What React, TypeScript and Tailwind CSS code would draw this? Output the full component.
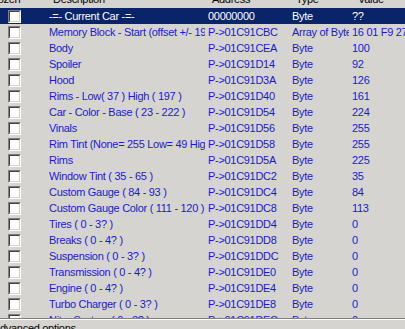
import React from 'react';

type Row = { desc: string; addr: string; type: string; value: string };

const rows: Row[] = [
    { desc: '-=- Current Car -=-', addr: '00000000', type: 'Byte', value: '??' },
    { desc: 'Memory Block - Start (offset +/- 19', addr: 'P->01C91CBC', type: 'Array of Byte', value: '16 01 F9 27' },
    { desc: 'Body', addr: 'P->01C91CEA', type: 'Byte', value: '100' },
    { desc: 'Spoiler', addr: 'P->01C91D14', type: 'Byte', value: '92' },
    { desc: 'Hood', addr: 'P->01C91D3A', type: 'Byte', value: '126' },
    { desc: 'Rims - Low( 37 ) High ( 197 )', addr: 'P->01C91D40', type: 'Byte', value: '161' },
    { desc: 'Car - Color - Base ( 23 - 222 )', addr: 'P->01C91D54', type: 'Byte', value: '224' },
    { desc: 'Vinals', addr: 'P->01C91D56', type: 'Byte', value: '255' },
    { desc: 'Rim Tint (None= 255 Low= 49 High= 50)', addr: 'P->01C91D58', type: 'Byte', value: '255' },
    { desc: 'Rims', addr: 'P->01C91D5A', type: 'Byte', value: '225' },
    { desc: 'Window Tint ( 35 - 65 )', addr: 'P->01C91DC2', type: 'Byte', value: '35' },
    { desc: 'Custom Gauge ( 84 - 93 )', addr: 'P->01C91DC4', type: 'Byte', value: '84' },
    { desc: 'Custom Gauge Color ( 111 - 120 )', addr: 'P->01C91DC8', type: 'Byte', value: '113' },
    { desc: 'Tires ( 0 - 3? )', addr: 'P->01C91DD4', type: 'Byte', value: '0' },
    { desc: 'Breaks ( 0 - 4? )', addr: 'P->01C91DD8', type: 'Byte', value: '0' },
    { desc: 'Suspension ( 0 - 3? )', addr: 'P->01C91DDC', type: 'Byte', value: '0' },
    { desc: 'Transmission ( 0 - 4? )', addr: 'P->01C91DE0', type: 'Byte', value: '0' },
    { desc: 'Engine ( 0 - 4? )', addr: 'P->01C91DE4', type: 'Byte', value: '0' },
    { desc: 'Turbo Charger ( 0 - 3? )', addr: 'P->01C91DE8', type: 'Byte', value: '0' },
    { desc: 'Nitro System ( 0 - 3? )', addr: 'P->01C91DEC', type: 'Byte', value: '0' },
];

const cols = 'grid grid-cols-[46px_159px_84px_60px_1fr]';

const Checkbox: React.FC = () => (
    <div className="ml-[8px] h-[13px] w-[13px] border border-t-[#808080] border-l-[#808080] border-b-white border-r-white bg-white">
        <div className="h-full w-full border border-t-[#404040] border-l-[#404040] border-b-[#d4d0c8] border-r-[#d4d0c8]" />
    </div>
);

const App: React.FC = () => {
    return (
        <div
            className="flex h-[329px] w-[405px] flex-col overflow-hidden bg-[#d6d4d0] text-[11px] leading-none tracking-[-0.3px]"
            style={{ fontFamily: '"Liberation Sans", Arial, sans-serif' }}
        >
            <div className="h-[318px] shrink-0 overflow-hidden">
                {/* header, mostly scrolled out of view */}
                <div className={`${cols} -mt-[9px] h-[17px] items-center text-black`}>
                    <div className="-ml-[12px] overflow-hidden whitespace-nowrap">Frozen</div>
                    <div className="overflow-hidden whitespace-nowrap pl-[7px]">Description</div>
                    <div className="overflow-hidden whitespace-nowrap pl-[7px]">Address</div>
                    <div className="overflow-hidden whitespace-nowrap pl-[7px]">Type</div>
                    <div className="overflow-hidden whitespace-nowrap pl-[9px]">Value</div>
                </div>
                {rows.map((r, i) => {
                    const sel = i === 0;
                    return (
                        <div
                            key={i}
                            className={`${cols} h-[16px] items-center ${sel ? 'bg-[#0a246a] text-white' : 'text-[#1a1ac8]'}`}
                        >
                            <div className="flex items-center">
                                <Checkbox />
                            </div>
                            <div className="overflow-hidden whitespace-nowrap pl-[3px]">{r.desc}</div>
                            <div className="overflow-hidden whitespace-nowrap pl-[3px]">{r.addr}</div>
                            <div className="overflow-hidden whitespace-nowrap pl-[3px]">{r.type}</div>
                            <div className="overflow-hidden whitespace-nowrap pl-[3px]">{r.value}</div>
                        </div>
                    );
                })}
            </div>
            <div className="flex-1 border-t border-t-[#808080]">
                <div className="h-full border-t border-t-white pt-[3px]">
                    <div className="-ml-[7px] whitespace-nowrap text-black">Advanced options</div>
                </div>
            </div>
        </div>
    );
};

export default App;
